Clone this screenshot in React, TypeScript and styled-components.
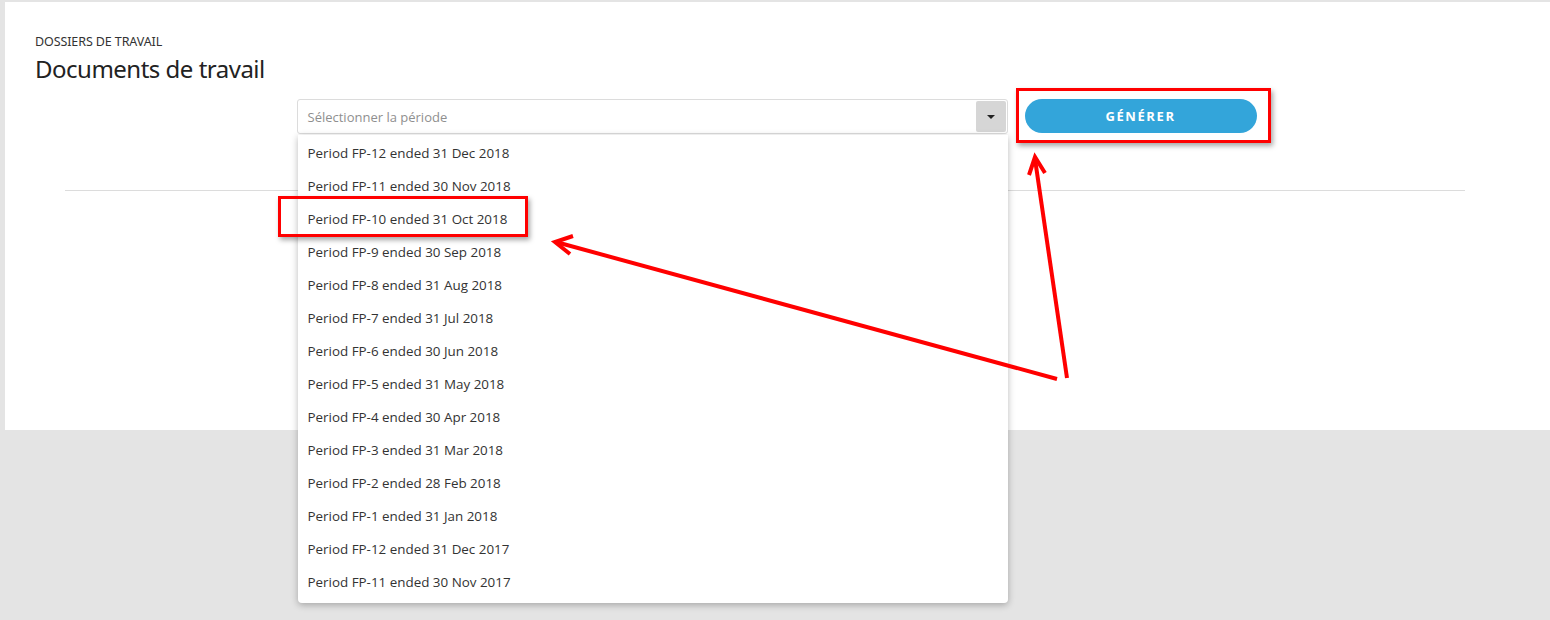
import * as React from 'react';
import styled, { createGlobalStyle } from 'styled-components';

const periods: string[] = [
  'Period FP-12 ended 31 Dec 2018',
  'Period FP-11 ended 30 Nov 2018',
  'Period FP-10 ended 31 Oct 2018',
  'Period FP-9 ended 30 Sep 2018',
  'Period FP-8 ended 31 Aug 2018',
  'Period FP-7 ended 31 Jul 2018',
  'Period FP-6 ended 30 Jun 2018',
  'Period FP-5 ended 31 May 2018',
  'Period FP-4 ended 30 Apr 2018',
  'Period FP-3 ended 31 Mar 2018',
  'Period FP-2 ended 28 Feb 2018',
  'Period FP-1 ended 31 Jan 2018',
  'Period FP-12 ended 31 Dec 2017',
  'Period FP-11 ended 30 Nov 2017',
];

const App: React.FunctionComponent = (): React.ReactElement => (
  <React.Fragment>
    <GlobalStyle />
    <Page>
      <Panel>
        <Header>
          <Breadcrumb>DOSSIERS DE TRAVAIL</Breadcrumb>
          <Title>Documents de travail</Title>
        </Header>
        <Toolbar>
          <SelectWrapper>
            <Select>
              <Placeholder>Sélectionner la période</Placeholder>
              <ArrowButton>
                <Caret />
              </ArrowButton>
            </Select>
            <Menu>
              {periods.map((p) => (
                <MenuItem key={p}>{p}</MenuItem>
              ))}
            </Menu>
          </SelectWrapper>
          <GenerateButton>GÉNÉRER</GenerateButton>
        </Toolbar>
        <Divider />
      </Panel>
    </Page>

    {/* Annotations drawn over the screenshot */}
    <HighlightBox $x={1016} $y={88} $w={255} $h={55} />
    <HighlightBox $x={278} $y={196} $w={250} $h={41} />
    <ArrowLayer width="1550" height="620" viewBox="0 0 1550 620">
      <g stroke="#f00" strokeWidth="4" strokeLinecap="butt" fill="none">
        <line x1="1057" y1="379" x2="556" y2="242" />
        <polyline points="573,236 555,242 570,254" />
        <line x1="1067" y1="378" x2="1035" y2="159" />
        <polyline points="1029,175 1035,157 1045,173" />
      </g>
    </ArrowLayer>
  </React.Fragment>
);

export default App;

// Styled components

const GlobalStyle = createGlobalStyle`
  html, body {
    margin: 0;
    padding: 0;
    background: #e4e4e4;
    overflow: hidden;
  }
  #root {
    width: 1550px;
    height: 620px;
  }
`;

const Page = styled('div')`
  padding: 2px 0 0 5px;
  height: 618px;
  box-sizing: border-box;
`;

const Panel = styled('div')`
  background: #fff;
  height: 428px;
  position: relative;
  display: flex;
  flex-direction: column;
`;

const Header = styled('div')`
  padding: 33px 0 0 30px;
  display: flex;
  flex-direction: column;
`;

const Breadcrumb = styled('div')`
  font-family: 'Noto Sans', sans-serif;
  font-size: 12.5px;
  color: #333;
  line-height: 14px;
  letter-spacing: -0.1px;
`;

const Title = styled('h1')`
  margin: 4px 0 0;
  font-family: 'Noto Sans', sans-serif;
  font-weight: 400;
  font-size: 24px;
  line-height: 32px;
  color: #222;
  letter-spacing: -0.5px;
`;

const Toolbar = styled('div')`
  display: flex;
  justify-content: center;
  align-items: flex-start;
  gap: 17px;
  margin-top: 14px;
  padding-right: 2px;
`;

const SelectWrapper = styled('div')`
  position: relative;
  width: 711px;
`;

const Select = styled('div')`
  height: 35px;
  box-sizing: border-box;
  border: 1px solid #dcdcdc;
  border-radius: 3px;
  display: flex;
  align-items: center;
  justify-content: space-between;
  padding: 0 1px 0 10px;
  background: #fff;
`;

const Placeholder = styled('span')`
  font-family: 'Open Sans', sans-serif;
  font-size: 13px;
  color: #8f8f8f;
`;

const ArrowButton = styled('div')`
  width: 30px;
  height: 31px;
  background: #d6d6d6;
  border-radius: 2px;
  display: flex;
  align-items: center;
  justify-content: center;
`;

const Caret = styled('span')`
  width: 0;
  height: 0;
  border-left: 4px solid transparent;
  border-right: 4px solid transparent;
  border-top: 4px solid #222;
`;

const Menu = styled('ul')`
  position: absolute;
  top: 36px;
  left: 1px;
  width: 710px;
  margin: 0;
  padding: 2px 0 4px;
  list-style: none;
  background: #fff;
  border-radius: 0 0 4px 4px;
  box-shadow: 0 2px 7px rgba(0, 0, 0, 0.28);
  z-index: 5;
`;

const MenuItem = styled('li')`
  height: 33px;
  line-height: 33px;
  padding-left: 10px;
  font-family: 'Open Sans', sans-serif;
  font-size: 13.4px;
  color: #333;
`;

const GenerateButton = styled('button')`
  width: 232px;
  height: 34px;
  border: none;
  border-radius: 17px;
  background: #33a5da;
  color: #fff;
  font-family: 'Open Sans', sans-serif;
  font-weight: 700;
  font-size: 13px;
  letter-spacing: 1.6px;
  cursor: pointer;
`;

const Divider = styled('hr')`
  margin: 56px 0 0 60px;
  width: 1400px;
  border: none;
  border-top: 1px solid #dcdcdc;
`;

const HighlightBox = styled('div')<{ $x: number; $y: number; $w: number; $h: number }>`
  position: absolute;
  left: ${(p) => p.$x}px;
  top: ${(p) => p.$y}px;
  width: ${(p) => p.$w}px;
  height: ${(p) => p.$h}px;
  box-sizing: border-box;
  border: 3px solid #f00;
  box-shadow: 2px 3px 5px rgba(0, 0, 0, 0.35);
  z-index: 10;
`;

const ArrowLayer = styled('svg')`
  position: absolute;
  left: 0;
  top: 0;
  pointer-events: none;
  z-index: 11;
`;
